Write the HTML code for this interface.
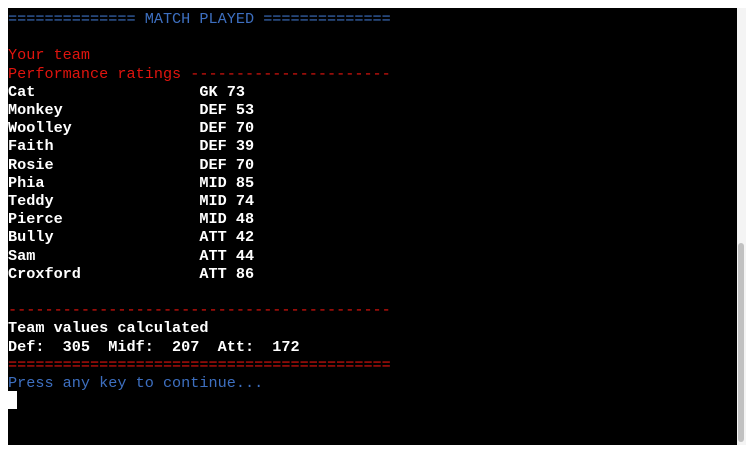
<!DOCTYPE html>
<html><head><meta charset="utf-8"><style>
html,body{margin:0;padding:0;background:#fff;width:750px;height:458px;overflow:hidden}
#t{position:absolute;left:8px;top:8px;width:729px;height:437px;background:#000}
#sb{position:absolute;left:737px;top:8px;width:9px;height:437px;background:#f4f4f4}
#th{position:absolute;left:738px;top:243px;width:6px;height:199px;background:#c1c1c1;border-radius:3px}
pre{margin:0;position:absolute;left:8px;top:10px;font-family:"Liberation Mono",monospace;font-size:15.2px;line-height:18.2px;color:#fff;font-weight:bold;white-space:pre}
.b{color:#3d6fc0;font-weight:normal}.r{color:#e0140e;font-weight:normal}
#cur{position:absolute;left:8px;top:391px;width:9px;height:18px;background:#fff}
</style></head><body>
<div id="t"></div><div id="sb"></div><div id="th"></div>
<pre><span class="b">============== MATCH PLAYED ==============</span>

<span class="r">Your team</span>
<span class="r">Performance ratings ----------------------</span>
Cat                  GK 73
Monkey               DEF 53
Woolley              DEF 70
Faith                DEF 39
Rosie                DEF 70
Phia                 MID 85
Teddy                MID 74
Pierce               MID 48
Bully                ATT 42
Sam                  ATT 44
Croxford             ATT 86

<span class="r">------------------------------------------</span>
Team values calculated
Def:  305  Midf:  207  Att:  172
<span class="r">==========================================</span>
<span class="b">Press any key to continue...</span></pre>
<div id="cur"></div>
</body></html>
